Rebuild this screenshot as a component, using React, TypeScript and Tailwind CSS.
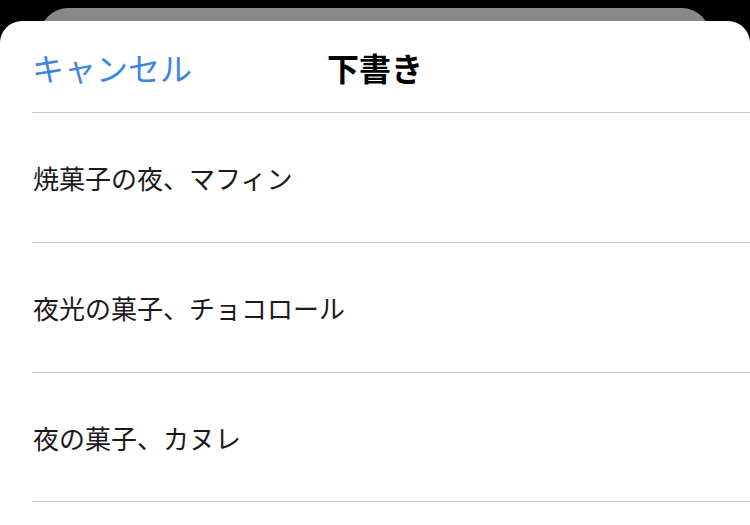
const drafts = ['焼菓子の夜、マフィン', '夜光の菓子、チョコロール', '夜の菓子、カヌレ'];

export default function App() {
  return (
    <div
      className="h-[525px] w-[750px] overflow-hidden bg-black"
      style={{ fontFamily: '"Noto Sans CJK JP", "Noto Sans", sans-serif' }}
    >
      {/* stacked sheet behind */}
      <div className="mx-[40px] mt-[8px] h-[40px] rounded-t-[28px] bg-[#898989]" />

      <div className="relative -mt-[27px] h-[520px] rounded-t-[22px] bg-white">
        <header className="grid h-[91px] grid-cols-[1fr_auto_1fr] items-center px-[32px]">
          <button type="button" className="justify-self-start text-[32px] leading-none text-[#3d85e2]">
            キャンセル
          </button>
          <h1 className="text-[32px] font-bold leading-none text-black">下書き</h1>
          <div />
        </header>

        <ul className="pl-[32px]">
          {drafts.map((d, i) => (
            <li
              key={d}
              className={`flex h-[130px] items-center border-t border-[#c9c9cb] pl-px text-[26px] text-[#1a1a1a] ${
                i === drafts.length - 1 ? 'border-b' : ''
              }`}
            >
              {d}
            </li>
          ))}
        </ul>
      </div>
    </div>
  );
}
